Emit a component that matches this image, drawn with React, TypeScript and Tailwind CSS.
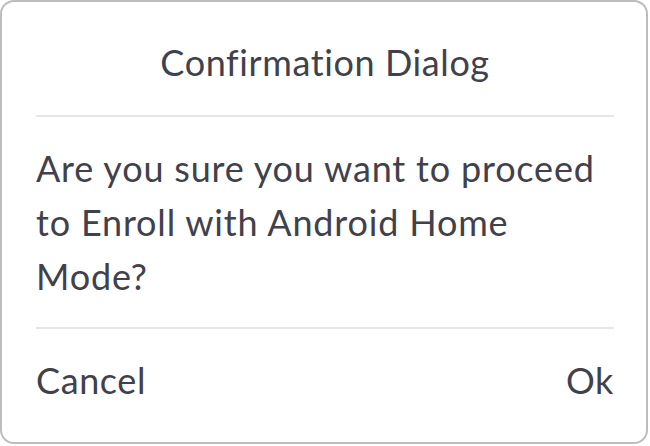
const App = () => {
  return (
    <div className="w-[650px] h-[446px] bg-white" style={{ fontFamily: "Lato, 'Noto Sans', sans-serif" }}>
      <div className="w-[648px] h-[444px] border-2 border-[#bdbdbd] rounded-[14px] pl-[34px] pr-[32px] flex flex-col text-[#41414c] text-[36px] leading-[54px] tracking-[0.6px]">
        {/* Header */}
        <div className="pt-[33px] pb-[26px] text-center">
          Confirmation Dialog
        </div>
        <div className="h-[2px] bg-[#e6e6e6]" />

        {/* Body */}
        <p className="py-6 tracking-[0.82px]">
          Are you sure you want to proceed to Enroll with Android Home Mode?
        </p>
        <div className="h-[2px] bg-[#e6e6e6]" />

        {/* Actions */}
        <div className="pt-[24px] flex items-center justify-between">
          <button className="tracking-[0.6px]">Cancel</button>
          <button className="tracking-[0.6px]">Ok</button>
        </div>
      </div>
    </div>
  );
};

export default App;
